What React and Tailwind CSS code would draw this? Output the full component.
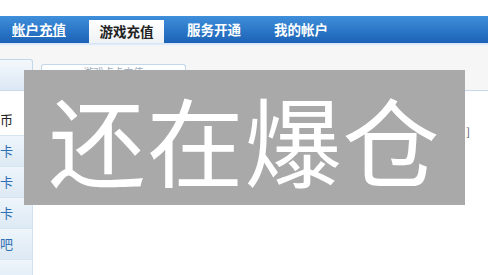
export default function App() {
  const tabs = ['帐户充值', '游戏充值', '服务开通', '我的帐户']
  const side = [
    { t: '币', on: true },
    { t: '卡' },
    { t: '卡' },
    { t: '卡' },
    { t: '吧' },
    { t: '' },
  ]

  return (
    <div className="relative w-[488px] h-[275px] overflow-hidden bg-white" style={{ fontFamily: '"Noto Sans CJK SC", "Noto Sans", sans-serif' }}>
      <div className="h-[16px] bg-white" />
      <div className="h-[27px] flex items-end bg-gradient-to-b from-[#3f8fdb] to-[#1c62b6] pl-[12px]">
        {tabs.map((t, i) =>
          i === 1 ? (
            <div key={t} className="h-[23px] w-[75px] mr-[23px] flex items-center justify-center bg-gradient-to-b from-white to-[#eef1f5] text-[13.5px] font-bold text-[#222]">
              {t}
            </div>
          ) : (
            <div key={t} className={`h-[27px] flex items-center text-[13.5px] font-bold text-white ${i === 0 ? 'underline mr-[23px]' : 'mr-[33px]'}`}>
              {t}
            </div>
          )
        )}
      </div>
      <div className="h-[3px] bg-gradient-to-b from-[#cfe2f6] to-[#f5f7fa]" />
      <div className="h-[45px] bg-[#f6f6f6] border-b border-[#c9d9ea] flex items-end gap-[8px]">
        <div className="w-[33px] h-[31px] rounded-tr-[3px] border border-l-0 border-b-0 border-[#c3d7ea] bg-gradient-to-b from-[#f4f8fc] to-[#dbe8f5]" />
        <div className="w-[145px] h-[26px] rounded-t-[3px] border border-b-0 border-[#c3d7ea] bg-gradient-to-b from-white to-[#edf3f9] flex items-start justify-center pt-[1px] text-[10px] leading-[12px] text-[#9aa9b8]">
          游戏点卡充值
        </div>
      </div>
      <div className="flex">
        <div className="w-[33px] border-r border-[#d3e1ee] flex flex-col pt-[14px]">
          {side.map((s, i) => (
            <div
              key={i}
              className={`h-[31px] shrink-0 border-b border-[#d6e4f0] flex items-center justify-end pr-[19px] text-[13px] ${s.on ? 'bg-white text-[#222]' : 'bg-gradient-to-b from-[#eef5fb] to-[#dde9f4] text-[#2f6fb3]'}`}
            >
              {s.t}
            </div>
          ))}
        </div>
        <div className="flex-1 pt-[32px] flex justify-end pr-[18px]">
          <span className="text-[11px] text-[#555]">]</span>
        </div>
      </div>
      <div className="absolute left-[24px] top-[70px] w-[441px] h-[135px] bg-[#a9a9a9] flex items-center justify-center">
        <span className="text-[97px] leading-none text-white tracking-[1px]">还在爆仓</span>
      </div>
    </div>
  )
}
